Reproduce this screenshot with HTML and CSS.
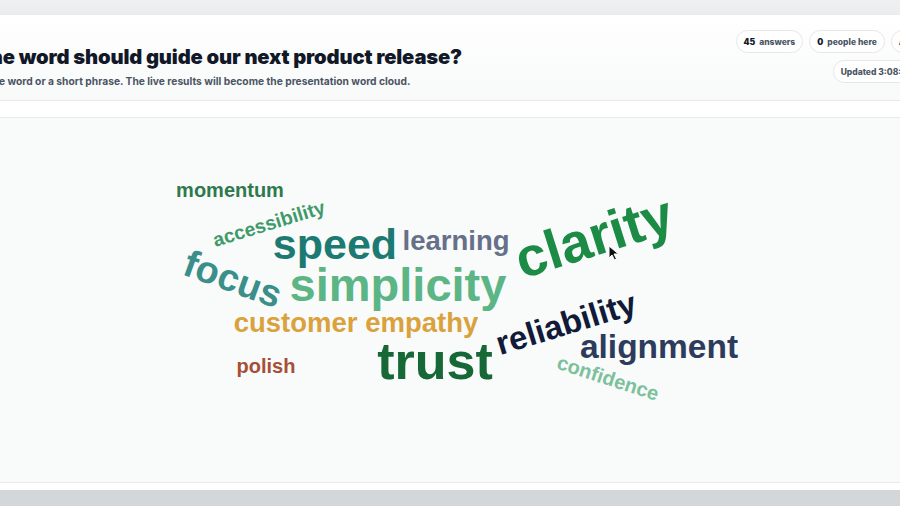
FILE: index.html
```html
<!DOCTYPE html>
<html lang="en">
<head>
<meta charset="utf-8">
<title>Word cloud</title>
<link rel="stylesheet" href="styles.css">
</head>
<body>
<div class="stage">
  <section class="panel">
    <header class="header">
      <div class="question">
        <h1 class="title">Which one word should guide our next product release?</h1>
        <p class="subtitle">Please add just one word or a short phrase. The live results will become the presentation word cloud.</p>
      </div>
      <div class="meta">
        <div class="pill-row">
          <span class="pill"><b>45</b> answers</span>
          <span class="pill"><b>0</b> people here</span>
          <span class="pill">Active</span>
        </div>
        <div class="pill-row">
          <span class="pill">Updated 3:08:41 PM</span>
        </div>
      </div>
    </header>
    <div class="gap"></div>
    <div class="cloud">
      <span class="word w-momentum">momentum</span>
      <span class="word w-accessibility">accessibility</span>
      <span class="word w-speed">speed</span>
      <span class="word w-learning">learning</span>
      <span class="word w-clarity">clarity</span>
      <span class="word w-focus">focus</span>
      <span class="word w-simplicity">simplicity</span>
      <span class="word w-empathy">customer empathy</span>
      <span class="word w-reliability">reliability</span>
      <span class="word w-alignment">alignment</span>
      <span class="word w-trust">trust</span>
      <span class="word w-polish">polish</span>
      <span class="word w-confidence">confidence</span>
      <svg class="cursor" width="12" height="16" viewBox="0 0 12 16" aria-hidden="true">
        <path d="M1 1 L1 13 L4 10 L6.5 15 L8.5 14 L6 9 L10.5 9 Z" fill="#111" stroke="#fff" stroke-width="1"/>
      </svg>
    </div>
    <div class="gap-bottom"></div>
  </section>
  <div class="footer-band"></div>
</div>
</body>
</html>
```

FILE: styles.css
```css
html, body {
  margin: 0;
  padding: 0;
  width: 900px;
  height: 506px;
  overflow: hidden;
}

body {
  background: linear-gradient(#f0f0f1, #ebecee 15px, #ebecee);
  font-family: Inter, "Noto Sans", sans-serif;
  color: #111827;
}

.stage {
  padding-top: 15px;
  display: flex;
  flex-direction: column;
}

.panel {
  background: #ffffff;
  display: flex;
  flex-direction: column;
}

.header {
  height: 86px;
  box-sizing: border-box;
  margin: 0 -34px 0 -92px;
  padding: 15px 0 0 0;
  display: flex;
  justify-content: space-between;
  background: linear-gradient(#ffffff, #f8f9f9);
  border-bottom: 1px solid #e6e8ea;
}

.question {
  padding-top: 15px;
}

.title {
  margin: 0;
  font-size: 20.2px;
  font-weight: 900;
  line-height: 24px;
  letter-spacing: -0.15px;
  color: #111827;
}

.subtitle {
  margin: 5px 0 0;
  font-size: 10.25px;
  font-weight: 700;
  line-height: 14px;
  color: #4b5563;
}

.meta {
  display: flex;
  flex-direction: column;
  align-items: flex-end;
  gap: 7px;
}

.pill-row {
  display: flex;
  gap: 6px;
}

.pill {
  height: 23px;
  box-sizing: border-box;
  padding: 0 7px;
  display: inline-flex;
  align-items: center;
  gap: 4px;
  border: 1px solid #e5e7eb;
  border-radius: 12px;
  background: #ffffff;
  font-size: 8.5px;
  font-weight: 800;
  color: #4b5563;
  white-space: nowrap;
}

.pill b {
  color: #111827;
  font-weight: 900;
}

.gap {
  height: 16px;
}

.cloud {
  position: relative;
  height: 364px;
  background: #f9fafa;
  border-top: 1px solid #e6e8ea;
  border-bottom: 1px solid #e6e8ea;
  overflow: hidden;
}

.gap-bottom {
  height: 7px;
}

.footer-band {
  height: 20px;
  background: #d4d7da;
}

.word {
  position: absolute;
  font-family: "Liberation Sans", Arial, sans-serif;
  font-weight: 700;
  line-height: 1;
  white-space: nowrap;
  transform: translate(-50%, -50%) rotate(var(--r, 0deg));
}

.w-momentum     { left: 230px; top: 72px;  font-size: 20px;  color: #2e7a4e; }
.w-accessibility{ left: 269px; top: 106px; font-size: 19.5px; color: #3f9a6b; --r: -17deg; }
.w-speed        { left: 335px; top: 126px; font-size: 43px;  color: #1d7a72; }
.w-learning     { left: 456px; top: 123px; font-size: 27.5px; color: #667089; }
.w-clarity      { left: 594px; top: 119px; font-size: 55px;  color: #1b8b46; --r: -17.5deg; }
.w-focus        { left: 233px; top: 161px; font-size: 38px;  color: #3b8f8b; --r: 20deg; }
.w-simplicity   { left: 398px; top: 166px; font-size: 47px;  color: #5cb585; }
.w-empathy      { left: 356px; top: 204.5px; font-size: 27.5px; color: #d9a23c; }
.w-reliability  { left: 566px; top: 205px; font-size: 33px;  color: #111a38; --r: -17deg; }
.w-alignment    { left: 659px; top: 229px; font-size: 33.5px; color: #2d3c5c; }
.w-trust        { left: 435px; top: 243px; font-size: 52px;  color: #176837; }
.w-polish       { left: 266px; top: 248px; font-size: 20px;  color: #a74f36; }
.w-confidence   { left: 608px; top: 260px; font-size: 20px;  color: #7cc09c; --r: 18deg; }

.cursor {
  position: absolute;
  left: 608px;
  top: 127px;
}
```
